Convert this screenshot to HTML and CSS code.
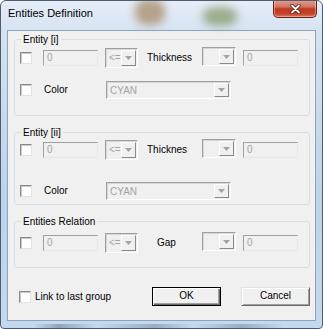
FILE: index.html
```html
<!DOCTYPE html>
<html lang="en">
<head>
    <meta charset="UTF-8">
    <meta name="viewport" content="width=device-width, initial-scale=1.0">
    <title>Entities Definition</title>
    <link rel="stylesheet" href="styles.css">
</head>

<body>

    <div class="window">
        <div class="titlebar">
            <span class="blob blob-tan"></span>
            <span class="blob blob-green"></span>
            <span class="title">Entities Definition</span>
            <span class="close">
                <svg width="13" height="10" viewBox="0 0 13 10">
                    <path d="M3 1.5 L10 8.5 M10 1.5 L3 8.5" stroke="#4b1b12" stroke-width="3.4" stroke-linecap="round" fill="none"/>
                    <path d="M3 1.5 L10 8.5 M10 1.5 L3 8.5" stroke="#ffffff" stroke-width="1.8" stroke-linecap="round" fill="none"/>
                </svg>
            </span>
        </div>

        <div class="client">
            <!-- first entity -->
            <fieldset class="group g1">
                <legend>Entity [i]</legend>
                <div class="row">
                    <span class="check"></span>
                    <span class="edit">0</span>
                    <span class="combo cmp"><span class="val">&lt;=</span><span class="drop"></span></span>
                    <span class="lbl lbl-thick">Thickness</span>
                    <span class="combo small"><span class="val"></span><span class="drop"></span></span>
                    <span class="edit edit-r">0</span>
                </div>
                <div class="row row-color">
                    <span class="check"></span>
                    <span class="lbl lbl-color">Color</span>
                    <span class="combo wide"><span class="val">CYAN</span><span class="drop"></span></span>
                </div>
            </fieldset>

            <!-- second entity -->
            <fieldset class="group g2">
                <legend>Entity [ii]</legend>
                <div class="row">
                    <span class="check"></span>
                    <span class="edit">0</span>
                    <span class="combo cmp"><span class="val">&lt;=</span><span class="drop"></span></span>
                    <span class="lbl lbl-thick">Thicknes</span>
                    <span class="combo small"><span class="val"></span><span class="drop"></span></span>
                    <span class="edit edit-r">0</span>
                </div>
                <div class="row row-color">
                    <span class="check"></span>
                    <span class="lbl lbl-color">Color</span>
                    <span class="combo wide"><span class="val">CYAN</span><span class="drop"></span></span>
                </div>
            </fieldset>

            <!-- relation -->
            <fieldset class="group g3">
                <legend>Entities Relation</legend>
                <div class="row">
                    <span class="check"></span>
                    <span class="edit">0</span>
                    <span class="combo cmp"><span class="val">&lt;=</span><span class="drop"></span></span>
                    <span class="lbl lbl-gap">Gap</span>
                    <span class="combo small"><span class="val"></span><span class="drop"></span></span>
                    <span class="edit edit-r">0</span>
                </div>
            </fieldset>

            <div class="footer">
                <span class="check"></span>
                <span class="link-lbl">Link to last group</span>
                <span class="btn btn-ok">OK</span>
                <span class="btn btn-cancel">Cancel</span>
            </div>
        </div>
    </div>

</body>

</html>
```

FILE: styles.css
```css
body {
    margin: 0;
    font-family: "Liberation Sans", Arial, sans-serif;
    font-size: 10px;
    color: #000;
}

.window {
    width: 323px;
    height: 329px;
    box-sizing: border-box;
    border: 1px solid #4d5d70;
    border-radius: 6px 6px 4px 4px;
    padding: 0 6px 7px 6px;
    display: flex;
    flex-direction: column;
    overflow: hidden;
    background:
        linear-gradient(to right, rgba(60, 70, 85, 0) 10%, rgba(60, 70, 85, 0.35) 18%, rgba(60, 70, 85, 0) 30%, rgba(60, 70, 85, 0.3) 48%, rgba(60, 70, 85, 0) 60%, rgba(60, 70, 85, 0.3) 75%, rgba(60, 70, 85, 0) 88%) bottom / 100% 4px no-repeat,
        linear-gradient(to bottom, #e6eef8 0%, #d4e2f1 10%, #bcd3ea 60%, #c4d8ee 100%);
}

.titlebar {
    height: 29px;
    flex-shrink: 0;
    display: flex;
    justify-content: space-between;
    align-items: flex-start;
    position: relative;
}

.blob {
    position: absolute;
    border-radius: 40%;
    filter: blur(4px);
    opacity: 0.75;
}

.blob-tan {
    left: 128px;
    top: -2px;
    width: 30px;
    height: 26px;
    background: #a88a66;
}

.blob-green {
    left: 196px;
    top: 6px;
    width: 34px;
    height: 19px;
    background: #879a6c;
}

.title {
    position: relative;
    font-size: 11px;
    line-height: 13px;
    margin: 6px 0 0 1px;
}

.close {
    position: relative;
    width: 44px;
    height: 18px;
    box-sizing: border-box;
    margin: -1px -1px 0 0;
    border: 1px solid #6e2116;
    border-top: none;
    border-radius: 0 0 5px 5px;
    background: linear-gradient(to bottom, #e6a090 0%, #d47462 40%, #bd3a22 52%, #c2412a 78%, #dc7456 100%);
    box-shadow: inset 0 0 0 1px rgba(255, 255, 255, 0.35);
    display: flex;
    align-items: center;
    justify-content: center;
}

.client {
    flex: 1;
    border: 1px solid #8ea4bb;
    background: #f0f0f0;
    padding: 2px 5px 0 6px;
}

.group {
    margin: 0;
    padding: 0;
    border: 1px solid #d5dfe5;
    border-radius: 3px;
    min-width: 0;
}

.group legend {
    margin-left: 6px;
    padding: 0 2px;
    font-size: 10px;
    line-height: 13px;
}

.g1 { padding-top: 1px; padding-bottom: 15px; }
.g1 .row-color { margin-top: 11px; }

.g2 { margin-top: 10px; padding-bottom: 3px; }
.g2 .row-color { margin-top: 20px; }

.g3 { margin-top: 10px; padding-top: 4px; padding-bottom: 14px; }

.row {
    display: flex;
    align-items: center;
    height: 21px;
    padding-left: 5px;
}

.check {
    width: 12px;
    height: 12px;
    box-sizing: border-box;
    flex-shrink: 0;
    background: #fff;
    border: 1px solid;
    border-color: #8a8a8a #e3e3e3 #e3e3e3 #8a8a8a;
    box-shadow: inset 1px 1px 0 #c8c8c8;
}

.edit {
    width: 55px;
    height: 16px;
    box-sizing: border-box;
    flex-shrink: 0;
    margin-left: 11px;
    padding-left: 3px;
    border: 1px solid;
    border-color: #a0a0a0 #e8e8e8 #e8e8e8 #a0a0a0;
    color: #a3a3a3;
    line-height: 14px;
}

.edit-r {
    margin-left: 7px;
}

.combo {
    height: 19px;
    box-sizing: border-box;
    flex-shrink: 0;
    display: flex;
    border: 1px solid;
    border-color: #a0a0a0 #ffffff #ffffff #a0a0a0;
    box-shadow: inset 1px 1px 0 #d6d6d6;
    padding: 1px 1px 1px 1px;
    color: #a3a3a3;
}

.combo .val {
    flex: 1;
    padding-left: 2px;
    line-height: 15px;
}

.combo .drop {
    width: 15px;
    box-sizing: border-box;
    border: 1px solid;
    border-color: #ffffff #8a8a8a #8a8a8a #ffffff;
    background: #f0f0f0 no-repeat center / 7px 4px url("data:image/svg+xml,%3Csvg xmlns='http://www.w3.org/2000/svg' width='7' height='4'%3E%3Cpath d='M0 0 L7 0 L3.5 4 Z' fill='%23a3a3a3'/%3E%3C/svg%3E");
}

.cmp {
    width: 33px;
    margin-left: 7px;
    height: 20px;
    align-self: flex-end;
}

.small {
    width: 34px;
    align-self: flex-start;
}

.wide {
    width: 125px;
    height: 18px;
}

.lbl {
    flex-shrink: 0;
}

.lbl-thick {
    width: 55px;
    margin-left: 9px;
}

.lbl-gap {
    width: 45px;
    margin-left: 19px;
}

.lbl-color {
    width: 62px;
    margin-left: 12px;
}

.footer {
    display: flex;
    align-items: center;
    height: 19px;
    margin-top: 19px;
}

.footer .check {
    margin-left: 5px;
}

.link-lbl {
    margin-left: 4px;
    flex: 1;
}

.btn {
    width: 69px;
    height: 19px;
    box-sizing: border-box;
    text-align: center;
    line-height: 16px;
    background: #f0f0f0;
}

.btn-ok {
    border: 1px solid #000;
    box-shadow: inset 1px 1px 0 #fff, inset -1px -1px 0 #696969, inset -2px -2px 0 #a0a0a0;
}

.btn-cancel {
    margin-left: 20px;
    border: 1px solid;
    border-color: #e3e3e3 #696969 #696969 #e3e3e3;
    box-shadow: inset 1px 1px 0 #fff, inset -1px -1px 0 #a0a0a0;
}
```
